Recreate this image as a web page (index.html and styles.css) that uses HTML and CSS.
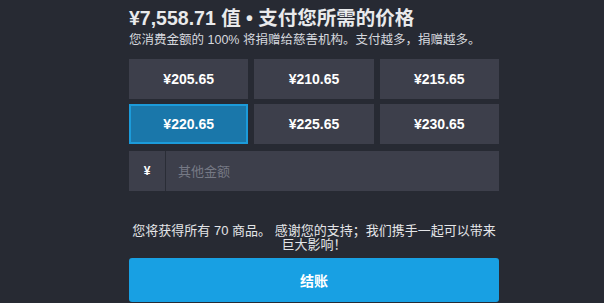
FILE: index.html
```html
<!DOCTYPE html>
<html lang="zh-CN">
<head>
    <meta charset="UTF-8">
    <meta name="viewport" content="width=device-width, initial-scale=1.0">
    <title>支付您所需的价格</title>
    <link rel="stylesheet" href="styles.css">
</head>
<body>

<div class="main">
    <h2 class="title">¥7,558.71 值 • 支付您所需的价格</h2>
    <p class="subtitle">您消费金额的 100% 将捐赠给慈善机构。支付越多，捐赠越多。</p>

    <div class="price-grid">
        <button class="price-btn">¥205.65</button>
        <button class="price-btn">¥210.65</button>
        <button class="price-btn">¥215.65</button>
        <button class="price-btn selected">¥220.65</button>
        <button class="price-btn">¥225.65</button>
        <button class="price-btn">¥230.65</button>
    </div>

    <div class="custom-amount">
        <span class="currency">¥</span>
        <input type="text" placeholder="其他金额">
    </div>

    <p class="thanks">您将获得所有 70 商品。 感谢您的支持；我们携手一起可以带来巨大影响！</p>

    <button class="checkout">结账</button>
</div>

</body>
</html>
```

FILE: styles.css
```css
body {
    margin: 0;
    background-color: #272a33;
    font-family: "Liberation Sans", "Noto Sans CJK SC", sans-serif;
    color: #e6e7ea;
}
.main {
    width: 370px;
    margin-left: 129px;
    padding-top: 6px;
}
.title {
    margin: 0;
    font-size: 19.5px;
    line-height: 24px;
    font-weight: bold;
    color: #e9eaec;
}
.subtitle {
    margin: 2px 0 0;
    font-size: 12.5px;
    line-height: 16px;
    color: #d6d9df;
}
.price-grid {
    display: grid;
    grid-template-columns: repeat(3, 1fr);
    column-gap: 6px;
    row-gap: 5px;
    margin-top: 11px;
}
.price-btn {
    height: 40px;
    border: 2px solid transparent;
    background-color: #3d3f4b;
    color: #ffffff;
    font-family: "Liberation Sans", sans-serif;
    font-size: 14px;
    font-weight: bold;
    cursor: pointer;
}
.price-btn.selected {
    background-color: #1a77aa;
    border-color: #1c9bda;
}
.custom-amount {
    display: flex;
    height: 40px;
    margin-top: 7px;
    background-color: #3d3f4b;
}
.currency {
    width: 36px;
    display: flex;
    align-items: center;
    justify-content: center;
    border-right: 1px solid #2a2d36;
    font-size: 12px;
    font-weight: bold;
    color: #ffffff;
}
.custom-amount input {
    flex: 1;
    border: none;
    background: transparent;
    padding: 0 12px;
    font-family: "Liberation Sans", "Noto Sans CJK SC", sans-serif;
    font-size: 13px;
    color: #ffffff;
    outline: none;
}
.custom-amount input::placeholder {
    color: #767985;
}
.thanks {
    margin: 33px 0 0;
    font-size: 13px;
    line-height: 14px;
    text-align: center;
    color: #e4e5e8;
}
.checkout {
    display: block;
    width: 100%;
    height: 44px;
    margin-top: 6px;
    border: none;
    border-radius: 3px;
    background-color: #18a0e3;
    color: #ffffff;
    font-family: "Liberation Sans", "Noto Sans CJK SC", sans-serif;
    font-size: 14px;
    font-weight: bold;
    cursor: pointer;
}
```
